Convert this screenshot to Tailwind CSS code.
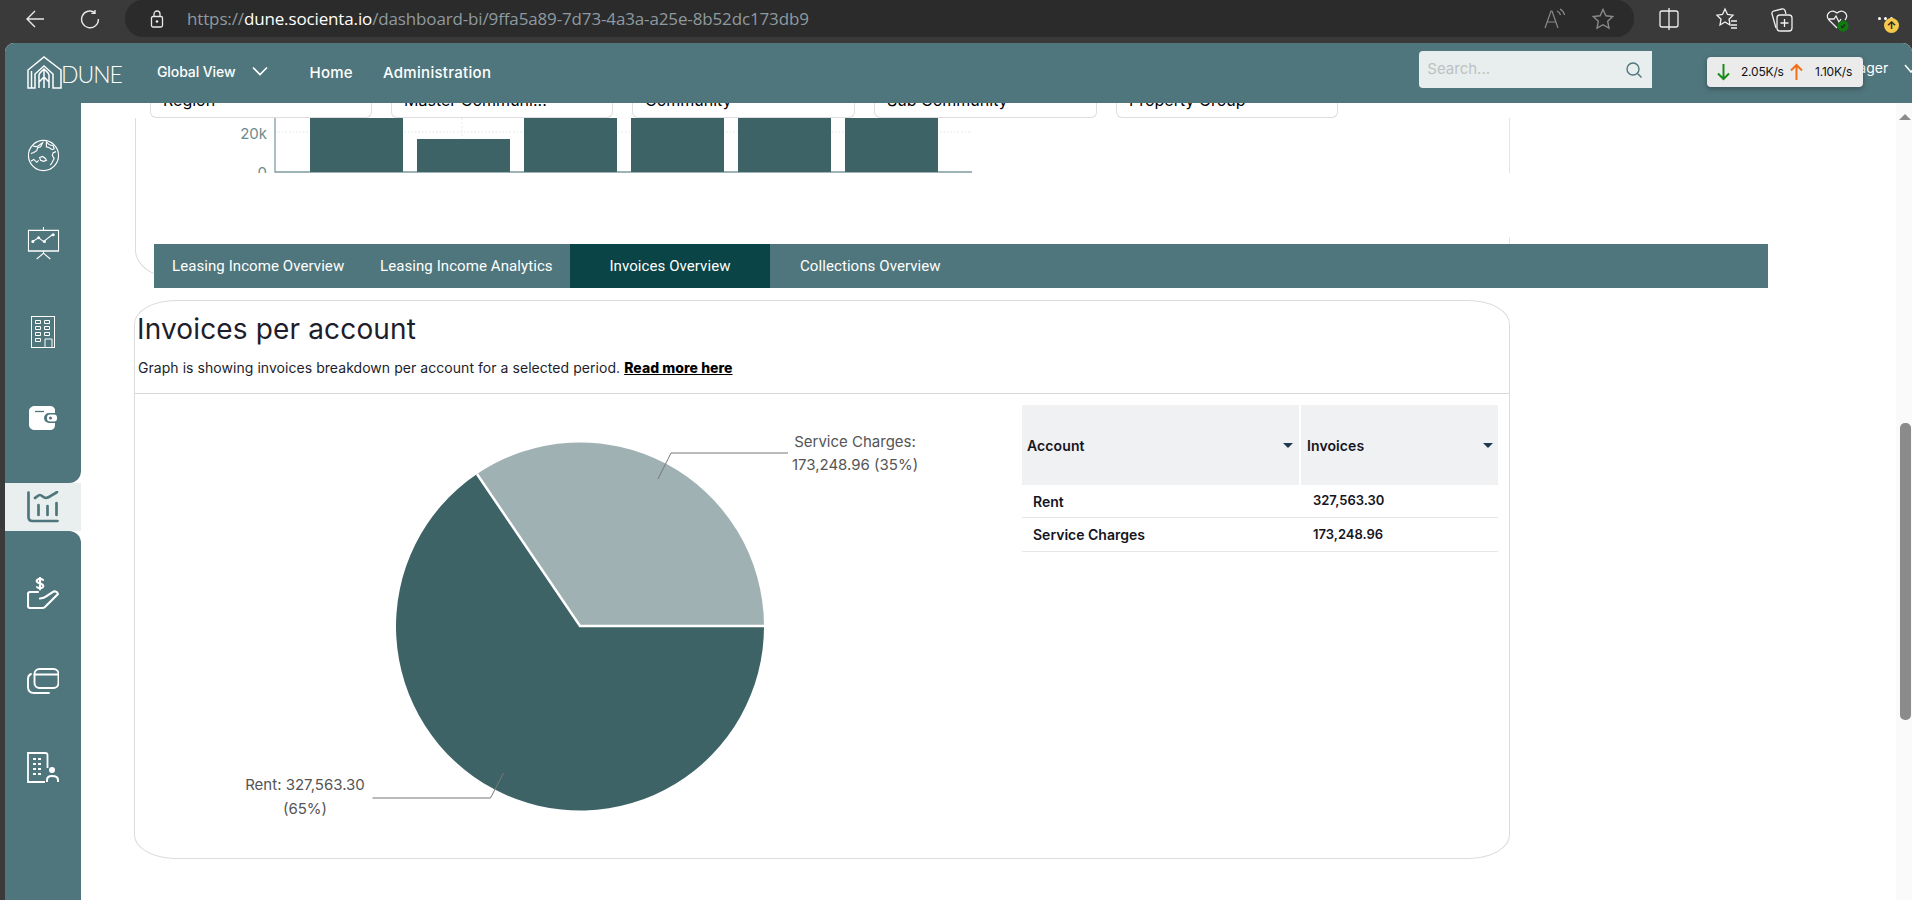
<!DOCTYPE html>
<html lang="en">
<head>
<meta charset="utf-8">
<title>Dune dashboard</title>
<script src="https://cdn.jsdelivr.net/npm/@tailwindcss/browser@4"></script>
</head>
<body class="m-0 h-[900px] w-[1912px] overflow-hidden bg-[#3a3a3a] font-['Inter',sans-serif]">
<!-- Browser chrome -->
<div class="flex h-[43px] items-start">
  <div class="flex h-[37px] w-[125px] items-center">
    <svg class="ml-[25px]" width="20" height="20" viewBox="0 0 20 20" fill="none" stroke="#e8e8e8" stroke-width="1.4"><path d="M19 10H2M10 2l-8 8 8 8"/></svg>
    <svg class="ml-[35px]" width="20" height="20" viewBox="0 0 20 20" fill="none" stroke="#e8e8e8" stroke-width="1.4"><path d="M15 3.6A8.4 8.4 0 1 0 18.4 10M15 1v3.4h-3.6"/></svg>
  </div>
  <div class="flex h-[37px] w-[1509px] items-center rounded-[18px] bg-[#2b2b2b]">
    <svg class="ml-[25px]" width="14" height="18" viewBox="0 0 14 18" fill="none" stroke="#e8e8e8" stroke-width="1.3"><rect x="1.5" y="6.5" width="11" height="10.5" rx="1.5"/><path d="M4 6.5V4a3 3 0 0 1 6 0v2.5"/><circle cx="7" cy="11.5" r=".7" fill="#e8e8e8"/></svg>
    <div class="ml-[23px] whitespace-nowrap font-['Open_Sans',sans-serif] text-[17px] tracking-[-0.14px] text-[#8f9aa0]">https://<span class="text-white">dune.socienta.io</span>/dashboard-bi/9ffa5a89-7d73-4a3a-a25e-8b52dc173db9</div>
    <svg class="ml-auto" width="24" height="24" viewBox="0 0 24 24" fill="none" stroke="#8a8a8a" stroke-width="1.2"><path d="M3 21 9 4h1l6 17M5 15h9M15 4c2 1 3 2 3.500 4M18 2c2.500 1.500 4 3 4.500 6"/></svg>
    <svg class="ml-[25px] mr-[19px]" width="24" height="24" viewBox="0 0 24 24" fill="none" stroke="#8a8a8a" stroke-width="1.4"><path d="m12 2.500 2.900 6.300 6.800.8-5 4.700 1.300 6.800-6-3.400-6 3.400 1.300-6.800-5-4.700 6.800-.8z"/></svg>
  </div>
  <div class="relative h-[37px] flex-1">
    <svg class="absolute left-[23px] top-[7px]" width="24" height="24" viewBox="0 0 24 24" fill="none" stroke="#f0f0f0" stroke-width="1.3"><rect x="3" y="4" width="18" height="16" rx="2"/><path d="M12 1v22"/></svg>
    <svg class="absolute left-[81px] top-[7px]" width="24" height="24" viewBox="0 0 24 24" fill="none" stroke="#f0f0f0" stroke-width="1.3"><path d="m10 2 2.500 5.500 5.500.7-4 4 1 5.800-5-3-5 3 1-5.800-4-4 5.500-.7zM16 14h6M16 18h6M16 21h6"/></svg>
    <svg class="absolute left-[135px] top-[7px]" width="26" height="26" viewBox="0 0 26 26" fill="none" stroke="#f0f0f0" stroke-width="1.3"><path d="M7 21 3 7c-.4-1.500.4-2.500 1.500-3L13 2c1.500-.3 2.500.4 3 1.500L17 7"/><rect x="8" y="8" width="15" height="16" rx="3"/><path d="M15.500 12v8M11.500 16h8"/></svg>
    <svg class="absolute left-[191px] top-[7px]" width="26" height="26" viewBox="0 0 26 26" fill="none" stroke="#f0f0f0" stroke-width="1.3"><path d="M12 21 4 13c-5-5 2-12 8-7 6-5 13 2 8 7M4 12h5l2-3 3 6 2-3"/><circle cx="18" cy="19" r="5.500" fill="#0f7b0f" stroke="none"/><path d="m16 19 1.500 1.500 2.500-3" stroke="#222"/></svg>
    <div class="absolute left-[244px] top-[17px] flex gap-[3px]"><span class="h-[3px] w-[3px] rounded-full bg-white"></span><span class="h-[3px] w-[3px] rounded-full bg-white"></span><span class="h-[3px] w-[3px] rounded-full bg-white"></span></div>
    <div class="absolute left-[250px] top-[18px] flex h-[15px] w-[15px] items-center justify-center rounded-full bg-[#f5c94c] text-[11px] font-bold leading-none text-[#222]">↑</div>
  </div>
</div>

<!-- App -->
<div class="relative ml-[5px] h-[857px] overflow-hidden rounded-t-[9px] bg-white">
  <!-- header -->
  <header class="relative z-10 flex h-[60px] items-center bg-[#4f767c] text-white">
    <svg class="ml-[22px] mt-[-2px] shrink-0" width="35" height="33" viewBox="0 0 35 33" fill="none" stroke="#fff" stroke-width="1.500"><path d="M1 32V14L17 1l17 13v18h-8V18L17 10 8 18v14zM12 32V19c0-2 2-3 5-6 3 3 5 4 5 6v13M17 13v19M12 26l5-5 5 5M4.500 32V15"/></svg>
    <div class="ml-[-1px] mt-[2px] w-[58px] shrink-0 font-['Lato',sans-serif] text-[23px] font-light leading-none tracking-[-1px]">DUNE</div>
    <div class="ml-[38px] mt-[-3px] whitespace-nowrap text-[14px] font-medium tracking-[-0.1px]">Global View</div>
    <svg class="ml-[16px] mt-[-3px] shrink-0" width="18" height="11" viewBox="0 0 18 11" fill="none" stroke="#fff" stroke-width="1.600"><path d="m2 1.500 7 7 7-7"/></svg>
    <div class="ml-[40px] whitespace-nowrap text-[15px] font-medium tracking-[0.3px]">Home</div>
    <div class="ml-[30px] whitespace-nowrap text-[15px] font-medium tracking-[0.3px]">Administration</div>
    <div class="ml-[928px] mt-[-7px] flex h-[37px] w-[233px] shrink-0 items-center justify-between rounded-l-[4px] bg-[#e8eeee] pl-[8px] pr-[9px] text-[15px] text-[#bcc2c2]">
      <span>Search...</span>
      <svg width="18" height="18" viewBox="0 0 18 18" fill="none" stroke="#4f767c" stroke-width="1.4"><circle cx="8" cy="8" r="6"/><path d="m12.500 12.500 4 4"/></svg>
    </div>
    <div class="ml-[206px] mt-[-11px] shrink-0 whitespace-nowrap text-[14px]">ager</div>
    <svg class="ml-[16px] mt-[-8px] shrink-0" width="14" height="10" viewBox="0 0 14 10" fill="none" stroke="#fff" stroke-width="1.500"><path d="m1 1 6 7 6-7"/></svg>
    <!-- net speed widget -->
    <div class="absolute left-[1702px] top-[14px] z-20 flex h-[30px] w-[156px] items-center rounded-[4px] bg-[#ebebeb] pl-[9px] text-[12px] text-[#111] shadow-[0_2px_5px_rgba(0,0,0,0.3)]">
      <svg width="15" height="18" viewBox="0 0 15 18" fill="none" stroke="#1a8a1a" stroke-width="2"><path d="M7.500 1v15M2 10.500l5.500 5.500 5.500-5.500"/></svg>
      <span class="ml-[10px] w-[44px] whitespace-nowrap tracking-[-0.2px]">2.05K/s</span>
      <svg class="ml-[4px]" width="15" height="18" viewBox="0 0 15 18" fill="none" stroke="#f0701a" stroke-width="2"><path d="M7.500 17V2M2 7.500 7.500 2 13 7.500"/></svg>
      <span class="ml-[11px] whitespace-nowrap tracking-[-0.2px]">1.10K/s</span>
    </div>
  </header>

  <div class="flex h-[797px]">
    <!-- sidebar -->
    <aside class="flex w-[76px] shrink-0 flex-col text-white">
      <div class="flex h-[380px] flex-col items-center rounded-br-[12px] bg-[#4f767c] pt-[9px]">
        <div class="flex h-[87px] items-center">
          <svg width="33" height="33" viewBox="0 0 34 34" fill="none" stroke="#fff" stroke-width="1.200"><circle cx="17" cy="17" r="15.500"/><path d="M6 7c2 1 5 1 7-1l3-2-2 4-3 1-1 3-3 2-3 1M4 23l3-2 3 3 2-2M20 3l3 3 4 1 1 3-2 1-3-2-3-1zM30 13l-3 1-1 3 2 3-2 4-2 3M13 19l3-1 3 2 1 2-3 1-3-1z"/></svg>
        </div>
        <div class="flex h-[89px] items-center">
          <svg width="33" height="33" viewBox="0 0 34 34" fill="none" stroke="#fff" stroke-width="1.100"><path d="M17 0v3M1.500 3.500h31v21H1.500zM1 25h32M17 25v2l-7 6M17 27l7 6"/><path d="m6 15 6-4 5 4 9-7"/><circle cx="6" cy="15" r="1" fill="#fff"/><circle cx="12" cy="11" r="1" fill="#fff"/><circle cx="18" cy="15" r="1" fill="#fff"/><circle cx="27" cy="8" r="1" fill="#fff"/></svg>
        </div>
        <div class="flex h-[88px] items-center">
          <svg width="24" height="32" viewBox="0 0 24 32" fill="none" stroke="#fff" stroke-width="1"><rect x=".5" y=".5" width="23" height="31"/><path d="M4.500 4.500h5v3h-5zM13.500 4.500h5v3h-5zM4.500 10.500h5v3h-5zM13.500 10.500h5v3h-5zM4.500 16.500h5v3h-5zM13.500 16.500h5v3h-5zM4.500 22.500h5v3h-5zM14 31v-8h7v8"/></svg>
        </div>
        <div class="flex h-[84px] items-center">
          <svg width="28" height="24" viewBox="0 0 28 24" fill="#fff"><path d="M6 0h15c3 0 5 2 5 4v3h-6a5 5 0 0 0 0 10h6v2c0 3-2 5-5 5H6c-3 0-6-2-6-5V5c0-3 3-5 6-5z"/><rect x="18" y="8.500" width="10" height="7" rx="3"/><circle cx="21.500" cy="12" r="1.500" fill="#4f767c"/><path d="M6 5.500h9" stroke="#4f767c" stroke-width="1.300"/></svg>
        </div>
      </div>
      <div class="flex h-[48px] items-center justify-center bg-[#e9eeee]">
        <svg width="32" height="32" viewBox="0 0 32 32" fill="none" stroke="#4f767c" stroke-width="2.700" stroke-linecap="round"><path d="M1.500 1.500V26c0 2.500 1.500 4 4 4h25M8 7c2-1 3-3 5-3s3 3 6 3 6-3 11-6M11.500 14v10M20.500 15v9M29.500 12v12"/></svg>
      </div>
      <div class="flex flex-1 flex-col items-center rounded-tr-[12px] bg-[#4f767c] pt-[18px]">
        <div class="flex h-[88px] items-center">
          <svg width="32" height="32" viewBox="0 0 32 32" fill="none" stroke="#fff" stroke-width="2.100" stroke-linecap="round"><path d="M16 3c-1-1.500-5-1.500-6 0-1 2 1 3 3 3.500s4 1.500 3 3.500c-1 1.500-5 1.500-6 0M13 .5v12"/><path d="M11 15H3c-1.500 0-2 1-2 2v12c0 1 .7 2 2 2h12c2 0 3-.5 4-2l12-12c-1-3-4-3-5-2l-8 5c-1 1-2 1-5 1.500"/></svg>
        </div>
        <div class="flex h-[88px] items-center">
          <svg width="32" height="26" viewBox="0 0 32 26" fill="none" stroke="#fff" stroke-width="1.900" stroke-linecap="round"><rect x="7.500" y="1" width="24" height="19" rx="5"/><path d="M7.500 6.500h24M4 6C1.500 7 1 9 1 11v8c0 3.500 2 6 6 6h15"/></svg>
        </div>
        <div class="flex h-[86px] items-center">
          <svg width="32" height="32" viewBox="0 0 32 32" fill="none" stroke="#fff" stroke-width="1.800"><path d="M18 30H1V1h17c2 0 2.500 1 2.500 2v13"/><path d="M6 7h3M11 7h3M6 12h3M11 12h3M6 17h3M11 17h3M6 22h3M11 22h3" stroke-width="2.200"/><circle cx="25" cy="18" r="3" fill="#fff" stroke="none"/><path d="M20 30v-2c0-3 2-4 5-4s6 1 6 4v2" stroke-width="2"/></svg>
        </div>
      </div>
    </aside>

    <!-- main scroll area -->
    <main class="relative h-full flex-1 overflow-hidden">
      <!-- filters, clipped by the header -->
      <div class="relative z-[5] ml-[69px] mt-[-18px] flex gap-[19px] bg-white">
        <div class="flex h-[33px] w-[222px] items-end rounded-b-[6px] border border-t-0 border-[#dedede] pb-[9px] pl-[12px] text-[16px] leading-none">Region</div>
        <div class="flex h-[33px] w-[222px] items-end rounded-b-[6px] border border-t-0 border-[#dedede] pb-[9px] pl-[12px] text-[16px] leading-none">Master Communi...</div>
        <div class="flex h-[33px] w-[223px] items-end rounded-b-[6px] border border-t-0 border-[#dedede] pb-[9px] pl-[12px] text-[16px] leading-none">Community</div>
        <div class="flex h-[33px] w-[223px] items-end rounded-b-[6px] border border-t-0 border-[#dedede] pb-[9px] pl-[12px] text-[16px] leading-none">Sub Community</div>
        <div class="flex h-[33px] w-[222px] items-end rounded-b-[6px] border border-t-0 border-[#dedede] pb-[9px] pl-[12px] text-[16px] leading-none">Property Group</div>
      </div>

      <!-- first card (scrolled) -->
      <section class="relative ml-[54px] h-[160px] w-[1375px] rounded-bl-[38px_28px] border-b border-l border-[#dcdcdc]">
        <div class="h-[55px] border-r border-[#e4e4e4]">
          <svg width="860" height="55" viewBox="0 0 860 55" class="block">
            <path d="M139 14h697" stroke="#dfe6e6" stroke-dasharray="1.500 2"/>
            <path d="M326 0v54" stroke="#e8ecec" stroke-dasharray="2 2"/>
            <path d="M139 0v54h697" fill="none" stroke="#7f9b9f" stroke-width="1.300"/>
            <g fill="#3e6367"><rect x="174" y="0" width="93" height="54"/><rect x="281" y="21" width="93" height="33"/><rect x="388" y="0" width="93" height="54"/><rect x="495" y="0" width="93" height="54"/><rect x="602" y="0" width="93" height="54"/><rect x="709" y="0" width="93" height="54"/></g>
            <text x="131" y="21" text-anchor="end" font-size="15" fill="#6d8a8e" font-family="Inter, sans-serif">20k</text>
            <text x="131" y="60" text-anchor="end" font-size="15" fill="#6d8a8e" font-family="Inter, sans-serif">0</text>
          </svg>
        </div>
        <div class="h-[64px]"></div>
        <div class="h-[7px] border-r border-[#e4e4e4]"></div>
      </section>

      <!-- tabs -->
      <nav class="absolute left-[73px] top-[141px] z-[2] flex h-[44px] w-[1614px] items-center bg-[#4f767c] font-['Roboto',sans-serif] text-[15px] font-normal tracking-[0.08px] text-white">
        <div class="flex h-full w-[208px] items-center whitespace-nowrap pl-[18px]">Leasing Income Overview</div>
        <div class="flex h-full w-[208px] items-center whitespace-nowrap pl-[18px]">Leasing Income Analytics</div>
        <div class="flex h-full w-[200px] items-center justify-center whitespace-nowrap bg-[#0a4446]">Invoices Overview</div>
        <div class="flex h-full items-center whitespace-nowrap pl-[30px]">Collections Overview</div>
      </nav>

      <!-- second card -->
      <section class="relative z-[3] ml-[53px] mt-[22px] h-[559px] w-[1376px] rounded-[42px/24px] border border-[#dcdcdc]">
        <h2 class="ml-[2px] mt-[8px] text-[28px] font-normal leading-[40px] tracking-[0.15px] text-[#1d1d2b]">Invoices per account</h2>
        <p class="ml-[3px] mt-[9px] whitespace-nowrap text-[14px] leading-[20px] tracking-[0.05px] text-[#1d1d2b]">Graph is showing invoices breakdown per account for a selected period. <a class="font-extrabold text-black underline">Read more here</a></p>
        <div class="mt-[15px] border-t border-[#d8d8d8]"></div>
        <div class="flex">
          <!-- pie -->
          <div class="h-[464px] w-[886px] shrink-0">
            <svg width="886" height="464" viewBox="0 0 886 464" class="block">
              <path d="M445 232 L629 232 A184 184 0 1 1 342 80 Z" fill="#3e6367"/>
              <path d="M445 232 L342 80 A184 184 0 0 1 629 232 Z" fill="#9fb1b3"/>
              <path d="M342 80 L445 232 L629 232" fill="none" stroke="#fff" stroke-width="2.500"/>
              <path d="M523 85 536 59H653" fill="none" stroke="#777" stroke-width="1"/>
              <path d="M368.500 379 355.500 404H237.500" fill="none" stroke="#777" stroke-width="1"/>
            </svg>
          </div>
          <!-- table -->
          <div class="ml-[1px] mt-[11px] w-[476px] text-[14px] font-semibold text-[#15151f]">
            <div class="flex h-[80px] items-center bg-[#eff1f3] tracking-[0.1px]">
              <div class="relative flex h-full w-[279px] items-center border-r-2 border-white pl-[5px]">Account<span class="absolute right-[6px] top-[38px] h-0 w-0 border-x-[5px] border-t-[5px] border-x-transparent border-t-[#1f3a50]"></span></div>
              <div class="relative flex h-full flex-1 items-center pl-[6px]">Invoices<span class="absolute right-[5px] top-[38px] h-0 w-0 border-x-[5px] border-t-[5px] border-x-transparent border-t-[#1f3a50]"></span></div>
            </div>
            <div class="flex h-[33px] items-center border-b border-[#e6e6e6]"><div class="w-[279px] pl-[11px]">Rent</div><div class="pl-[12px] text-[13px]">327,563.30</div></div>
            <div class="flex h-[34px] items-center border-b border-[#e6e6e6]"><div class="w-[279px] pl-[11px]">Service Charges</div><div class="pl-[12px] text-[13px]">173,248.96</div></div>
          </div>
        </div>
        <!-- pie labels -->
        <div class="absolute left-[620px] top-[129px] w-[200px] text-center text-[15px] leading-[23px] text-[#555]">Service Charges:<br>173,248.96 (35%)</div>
        <div class="absolute left-[70px] top-[472px] w-[200px] text-center text-[15px] leading-[24px] text-[#555]">Rent: 327,563.30<br>(65%)</div>
      </section>

      <!-- scrollbar -->
      <div class="absolute bottom-0 right-0 top-0 z-[6] w-[16px] bg-[#fafafa]">
        <span class="absolute left-[3px] top-[11px] h-0 w-0 border-x-[6px] border-b-[6px] border-x-transparent border-b-[#8b8b8b]"></span>
        <div class="absolute left-[4px] top-[320px] h-[297px] w-[11px] rounded-[5px] bg-[#8b8b8b]"></div>
      </div>
    </main>
  </div>
</div>
</body>
</html>
